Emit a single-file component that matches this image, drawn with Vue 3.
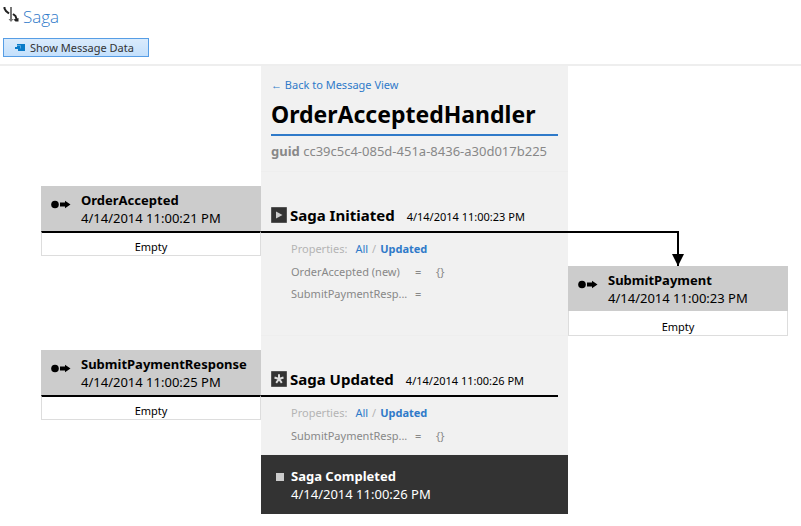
<script setup>
const steps = [
  {
    id: 'initiated',
    title: 'Saga Initiated',
    time: '4/14/2014 11:00:23 PM',
    icon: 'play',
    incoming: { name: 'OrderAccepted', time: '4/14/2014 11:00:21 PM' },
    outgoing: { name: 'SubmitPayment', time: '4/14/2014 11:00:23 PM' },
    properties: [
      { name: 'OrderAccepted (new)', value: '{}' },
      { name: 'SubmitPaymentResp...', value: '' },
    ],
  },
  {
    id: 'updated',
    title: 'Saga Updated',
    time: '4/14/2014 11:00:26 PM',
    icon: 'star',
    incoming: { name: 'SubmitPaymentResponse', time: '4/14/2014 11:00:25 PM' },
    outgoing: null,
    properties: [{ name: 'SubmitPaymentResp...', value: '{}' }],
  },
]
</script>

<template>
  <div class="saga-view">
    <header class="toolbar">
      <div class="brand">
        <svg class="brand-icon" width="17" height="18" viewBox="0 0 17 18" aria-hidden="true">
          <path d="M8 2v13" stroke="#777" stroke-width="2" fill="none" />
          <path d="M5.500 14h5L8 17z" fill="#777" />
          <path d="M1.500 2v1.500L3 6l3 2.500" stroke="#222" stroke-width="2" fill="none" />
          <path d="M10 9l2.500 2 1 3" stroke="#222" stroke-width="2" fill="none" />
          <path d="M10.500 14.500l5-1.500v3.500h-3z" fill="#222" />
        </svg>
        <h2>Saga</h2>
      </div>
      <button type="button" class="data-button">
        <svg width="10" height="8" viewBox="0 0 10 8" aria-hidden="true">
          <path d="M2 0h8v7H3V5H0V3h2z" fill="#0a7bc8" />
          <path d="M2 1.500h3.500v3" stroke="#58a9e0" fill="none" />
        </svg>
        <span>Show Message Data</span>
      </button>
    </header>

    <main class="diagram">
      <section class="row">
        <div class="center intro">
          <a href="#" class="back">← Back to Message View</a>
          <h1>OrderAcceptedHandler</h1>
          <p class="guid"><b>guid</b> cc39c5c4-085d-451a-8436-a30d017b225</p>
        </div>
      </section>

      <section v-for="step in steps" :key="step.id" class="row">
        <article class="card incoming">
          <div class="card-head">
            <svg class="message-icon" width="20" height="9" viewBox="0 0 20 9" aria-hidden="true">
              <circle cx="4" cy="4.500" r="3.800" />
              <path d="M9 2.500h5V.800L19.500 4.500 14 8.200V6.500H9z" />
            </svg>
            <div>
              <strong>{{ step.incoming.name }}</strong>
              <time>{{ step.incoming.time }}</time>
            </div>
          </div>
          <div class="card-body">Empty</div>
        </article>

        <div class="center step">
          <div class="step-head" :class="{ through: step.outgoing }">
            <svg class="step-icon" width="16" height="16" viewBox="0 0 16 16" aria-hidden="true">
              <path d="M.500.500h15v15H.500z" fill="#333" stroke="#555" />
              <path v-if="step.icon === 'play'" d="M5 4.500l6.500 3.500L5 11.500z" fill="#ccc" />
              <path
                v-else
                d="M8 8V3.300M8 8l4.500-1.500M8 8l2.800 3.800M8 8l-2.800 3.800M8 8L3.500 6.500"
                stroke="#ddd"
                stroke-width="2"
                fill="none"
              />
            </svg>
            <h3>{{ step.title }}</h3>
            <time>{{ step.time }}</time>
          </div>
          <div class="filter">
            <span>Properties:</span>
            <a href="#">All</a>
            <span class="slash">/</span>
            <a href="#" class="active">Updated</a>
          </div>
          <dl class="properties">
            <template v-for="property in step.properties" :key="property.name">
              <dt>{{ property.name }}</dt>
              <dd>=</dd>
              <dd>{{ property.value }}</dd>
            </template>
          </dl>
        </div>

        <div v-if="step.outgoing" class="outgoing">
          <div class="connector">
            <svg width="12" height="12" viewBox="0 0 12 12" aria-hidden="true">
              <path d="M0 0h12L6 12z" />
            </svg>
          </div>
          <article class="card">
            <div class="card-head">
              <svg class="message-icon" width="20" height="9" viewBox="0 0 20 9" aria-hidden="true">
                <circle cx="4" cy="4.500" r="3.800" />
                <path d="M9 2.500h5V.800L19.500 4.500 14 8.200V6.500H9z" />
              </svg>
              <div>
                <strong>{{ step.outgoing.name }}</strong>
                <time>{{ step.outgoing.time }}</time>
              </div>
            </div>
            <div class="card-body">Empty</div>
          </article>
        </div>
      </section>

      <section class="row">
        <div class="center completed">
          <span class="stop-icon"></span>
          <div>
            <strong>Saga Completed</strong>
            <time>4/14/2014 11:00:26 PM</time>
          </div>
        </div>
      </section>
    </main>
  </div>
</template>

<style>
body {
  margin: 0;
  background: #fff;
}
</style>

<style scoped>
.saga-view {
  font-family: "Noto Sans", "Open Sans", sans-serif;
  font-size: 13px;
  line-height: 18px;
  color: #000;
}

.saga-view * {
  box-sizing: border-box;
}

h1,
h2,
h3,
p,
dl,
dd {
  margin: 0;
}

a {
  color: #2f7ac9;
  text-decoration: none;
}

strong,
time {
  display: block;
  white-space: nowrap;
}

.toolbar {
  padding: 5px 3px 7px;
  border-bottom: 2px solid #eee;
}

.brand {
  display: flex;
  gap: 3px;
  height: 24px;
}

.brand h2 {
  font-family: "Open Sans", "Noto Sans", sans-serif;
  font-size: 17px;
  font-weight: 300;
  line-height: 24px;
  color: #2f7ac9;
}

.data-button {
  display: flex;
  align-items: center;
  gap: 5px;
  height: 19px;
  margin-top: 9px;
  padding: 0 14px 0 11px;
  border: 1px solid #569de5;
  background: linear-gradient(#daebfc, #c4e0fc);
  font-family: inherit;
  font-size: 11px;
  line-height: 17px;
  color: #333;
}

.diagram {
  padding: 0 13px 0 41px;
}

.row {
  display: grid;
  grid-template-columns: minmax(0, 220fr) minmax(0, 307fr) minmax(0, 220fr);
}

.center {
  grid-column: 2;
  background: #f1f1f1;
}

.intro {
  padding: 10px 10px 11px;
  border-bottom: 1px solid #eee;
  white-space: nowrap;
}

.back {
  display: block;
  font-size: 11px;
}

h1 {
  padding: 2px 0;
  border-bottom: 2px solid #2f7ac9;
  font-size: 23px;
  font-weight: 700;
  line-height: 36px;
}

.guid {
  margin-top: 6px;
  color: #888;
}

.card {
  align-self: start;
}

.incoming {
  margin-top: 14px;
}

.card-head {
  display: flex;
  align-items: flex-start;
  gap: 10px;
  height: 45px;
  padding: 5px 10px 4px;
  background: #ccc;
}

.message-icon {
  flex: none;
  margin-top: 9px;
}

.card-body {
  height: 25px;
  padding-top: 7px;
  border: 1px solid #ddd;
  border-top: 0;
  background: #fff;
  font-size: 11px;
  line-height: 18px;
  text-align: center;
}

.incoming .card-body {
  padding-top: 5px;
  border-top: 2px solid #000;
}

.step {
  padding: 14px 0 7px;
  border-bottom: 1px solid #eee;
}

.step-head {
  display: flex;
  align-items: center;
  gap: 3px;
  height: 47px;
  margin-right: 10px;
  padding: 13px 0 0 10px;
  border-bottom: 2px solid #000;
}

.step-head.through {
  margin-right: 0;
}

.step-head h3 {
  font-size: 15px;
  font-weight: 700;
  line-height: 20px;
  white-space: nowrap;
}

.step-head time {
  margin-left: 9px;
  padding-top: 3px;
  font-size: 11px;
}

.filter {
  display: flex;
  gap: 4px;
  padding: 7px 10px 0 30px;
  font-size: 11px;
  color: #b4b4b4;
}

.filter span:first-child {
  margin-right: 4px;
}

.active {
  font-weight: 700;
}

.properties {
  display: grid;
  grid-template-columns: 124px 21px 1fr;
  padding: 3px 10px 0 30px;
  font-size: 11px;
  line-height: 22px;
  color: #888;
}

.row:has(.outgoing) .step {
  padding-bottom: 30px;
}

.outgoing {
  padding-top: 59px;
}

.connector {
  position: relative;
  width: calc(50% + 1px);
  height: 35px;
  border-top: 2px solid #000;
  border-right: 2px solid #000;
}

.connector svg {
  position: absolute;
  right: -7px;
  bottom: 0;
}

.completed {
  display: flex;
  align-items: flex-start;
  gap: 7px;
  padding: 12px 15px 11px;
  background: #333;
  color: #fff;
}

.stop-icon {
  width: 8px;
  height: 8px;
  margin-top: 6px;
  background: #ccc;
}
</style>
